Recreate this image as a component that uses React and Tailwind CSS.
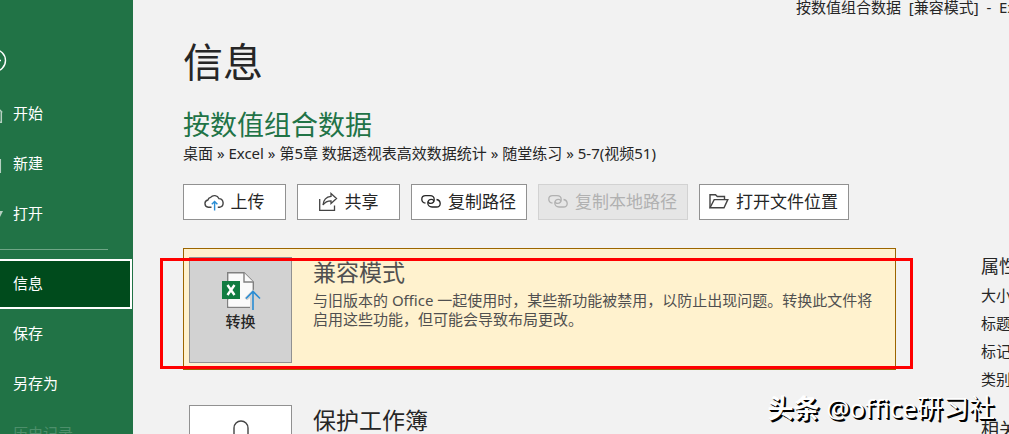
import clsx from 'clsx';

const navItems = [
  { label: '开始', icon: 'home' },
  { label: '新建', icon: 'page' },
  { label: '打开', icon: 'folder', last: true },
  { label: '信息', active: true },
  { label: '保存' },
  { label: '另存为' },
  { label: '历史记录', disabled: true },
];

const properties = ['大小', '标题', '标记', '类别'];

function NavIcon({ name }) {
  return (
    <svg className="w-1 h-5 shrink-0 mt-1" viewBox="0 0 4 20" fill="none" stroke="#b5d0c1" strokeWidth="1.5" aria-hidden="true">
      {name === 'home' && <path d="M-2 4.5L0 5.2L2.2 7.5M1.3 7V17.3H-2" />}
      {name === 'page' && <path d="M0.3 4V18" />}
      {name === 'folder' && <path fill="#b5d0c1" stroke="none" d="M0 6H3L0 12Z" />}
    </svg>
  );
}

function CloudIcon() {
  return (
    <svg className="w-5 h-5" viewBox="0 0 20 20" fill="none" strokeWidth="1.4" aria-hidden="true">
      <path stroke="#444" d="M7.5 15.3H4.3A3.7 3.7 0 0 1 3.9 8 A3.6 3.6 0 0 1 6.6 5.4 A4.9 4.9 0 0 1 14.9 6.6 A4.4 4.4 0 0 1 15.6 15.3 H13.8" />
      <path stroke="#2a8dd4" d="M10.6 18.5V9.5M7.8 12.3L10.6 9.5L13.4 12.3" />
    </svg>
  );
}

function ShareIcon() {
  return (
    <svg className="w-5 h-5" viewBox="0 0 20 20" fill="none" stroke="#444" strokeWidth="1.3" aria-hidden="true">
      <path d="M1.7 7V18.3H16.5V13.5" />
      <path d="M13 1.5L18.5 6.5L13 11.5V8.8C9.5 8.8 7 10 5 13C5.5 8 8.5 4.8 13 4.4Z" />
    </svg>
  );
}

function LinkIcon() {
  return (
    <svg className="w-5 h-5" viewBox="0 0 20 20" fill="none" stroke="currentColor" strokeWidth="1.3" aria-hidden="true">
      <path d="M4.5 11.2C2 10.7 .8 9.2 .8 7.2C.8 5 2.4 3.7 4.6 3.7H9C11.5 3.7 13.2 5.4 13.2 7.6C13.2 10 11.5 11.4 9.6 11.4C8.2 11.4 7.3 10.5 7.3 9.4" />
      <path d="M15.5 7.5C18 8 19.2 9.5 19.2 11.5C19.2 13.7 17.6 15 15.4 15H11C8.5 15 6.8 13.3 6.8 11.1C6.8 8.7 8.5 7.3 10.4 7.3C11.8 7.3 12.7 8.2 12.7 9.3" />
    </svg>
  );
}

function FolderIcon() {
  return (
    <svg className="w-5 h-5" viewBox="0 0 20 20" fill="none" stroke="#444" strokeWidth="1.4" aria-hidden="true">
      <path d="M1 15.8V2.7H6.5L8.3 4.5H15.5V7.5" />
      <path d="M1 15.8L5.2 7.6H18.8L15 15.8Z" />
    </svg>
  );
}

function ConvertIcon() {
  return (
    <svg className="w-10 h-10" viewBox="0 0 40 40" fill="none" aria-hidden="true">
      <path fill="#fafafa" stroke="#808080" strokeWidth="1.4" d="M6.7 2.7H23L32.3 12V37.3H6.7Z" />
      <path fill="#fafafa" stroke="#808080" strokeWidth="1.4" d="M23 2.7V12H32.3" />
      <path fill="#d2d2d2" d="M29 40V28L26 30.5L23.5 28L32 19.5L40 27V40Z" />
      <path fill="#fafafa" d="M7.4 30H29V36.6H7.4Z" />
      <rect x="1" y="11" width="18" height="18" fill="#107c41" />
      <path stroke="#fff" strokeWidth="2.4" d="M6.5 15L13.5 25M13.5 15L6.5 25" />
      <path stroke="#2a8dd4" strokeWidth="1.6" d="M32 40V22M25 28.5L32 21.5L39 28.5" />
    </svg>
  );
}

const actions = [
  { label: '上传', Icon: CloudIcon },
  { label: '共享', Icon: ShareIcon },
  { label: '复制路径', Icon: LinkIcon },
  { label: '复制本地路径', Icon: LinkIcon, disabled: true },
  { label: '打开文件位置', Icon: FolderIcon },
];

function Sidebar() {
  return (
    <nav className="w-[133px] shrink-0 bg-[#217346] text-[15px] text-white">
      <button aria-label="返回" className="block h-[89px] pt-8">
        <svg className="w-2 h-6" viewBox="0 0 8 24" fill="none" stroke="#fff" strokeWidth="1.4" aria-hidden="true">
          <circle cx="-5.5" cy="11.5" r="11" />
          <path d="M-9 11.5H1" />
        </svg>
      </button>
      {navItems.map((item) => (
        <div key={item.label}>
          <button
            disabled={item.disabled}
            className={clsx(
              'flex h-[50px] items-center pb-0.5 text-left',
              item.active ? 'w-[132px] border-y-2 border-r-2 border-white bg-[#004b1c]' : 'w-full',
              item.disabled && 'text-[#4d8f6b]'
            )}
          >
            <span className="flex w-[13px] shrink-0">{item.icon && <NavIcon name={item.icon} />}</span>
            {item.label}
          </button>
          {item.last && <hr className="mt-[10px] mb-[9px] w-[108px] border-[#6fa686]" />}
        </div>
      ))}
    </nav>
  );
}

function App() {
  return (
    <div className="relative flex h-screen overflow-hidden bg-[#f2f2f2] font-['Noto_Sans','Noto_Sans_CJK_SC',sans-serif] text-[#262626]">
      <Sidebar />
      <div className="min-w-0 flex-1 pl-[50px]">
        <div className="ml-auto w-[213px] whitespace-pre text-[15px] leading-[14px]">按数值组合数据  [兼容模式]  -  Excel</div>
        <h1 className="mt-[22px] text-[40px] leading-[52px]">信息</h1>
        <h2 className="mt-5 text-[27px] leading-[34px] text-[#217346]">按数值组合数据</h2>
        <p className="text-[15px] leading-[22px]">桌面 » Excel » 第5章 数据透视表高效数据统计 » 随堂练习 » 5-7(视频51)</p>

        <div className="mt-5 flex gap-[11px]">
          {actions.map(({ label, Icon, disabled }) => (
            <button
              key={label}
              disabled={disabled}
              className={clsx(
                'flex h-9 min-w-[103px] shrink-0 items-center justify-center gap-[7px] border pr-[10px] pl-[9px] text-[17px] whitespace-nowrap',
                disabled ? 'border-[#d2d2d2] bg-[#e6e6e6] text-[#b1b1b1]' : 'border-[#919191] bg-white'
              )}
            >
              <Icon />
              {label}
            </button>
          ))}
        </div>

        <div className="mt-7 flex">
          <div className="mr-[85px] min-w-0 flex-1">
            <section className="relative flex h-[122px] border border-[#9c6500] bg-[#fff2ce] pt-2 pl-[5px]">
              <button className="flex h-[106px] w-[103px] shrink-0 flex-col items-center border border-[#919191] bg-[#d2d2d2] pt-3 text-[15px] leading-[22px] font-medium">
                <ConvertIcon />
                转换
              </button>
              <div className="ml-[21px] pr-4 text-[#505050]">
                <h3 className="text-[23px] leading-[30px]">兼容模式</h3>
                <p className="mt-1 text-[15px] leading-[19px]">
                  与旧版本的 Office 一起使用时，某些新功能被禁用，以防止出现问题。转换此文件将启用这些功能，但可能会导致布局更改。
                </p>
              </div>
              <div className="pointer-events-none absolute top-[9px] -right-[18px] bottom-0 -left-6 border-3 border-[#ff0000]" />
            </section>
            <section className="mt-[35px] flex pl-[6px]">
              <button aria-label="保护工作簿" className="flex h-[106px] w-[103px] shrink-0 justify-center border border-[#919191] bg-white pt-[14px]">
                <svg className="w-5 h-8" viewBox="0 0 20 32" fill="none" stroke="#444" strokeWidth="1.4" aria-hidden="true">
                  <path d="M3 20V8A7 7 0 0 1 17 8V20" />
                </svg>
              </button>
              <h3 className="ml-[21px] text-[23px] leading-[30px]">保护工作簿</h3>
            </section>
          </div>
          <aside className="w-7 shrink-0 whitespace-nowrap">
            <h4 className="mt-1 text-[18px] leading-7">属性</h4>
            <ul className="mt-px text-[15px] leading-7">
              {properties.map((name) => (
                <li key={name}>{name}</li>
              ))}
            </ul>
            <h4 className="mt-[22px] text-[18px] leading-7">相关人员</h4>
          </aside>
        </div>
      </div>
      <p className="absolute right-[14px] bottom-[10px] text-[26px] leading-8 whitespace-nowrap text-white text-shadow-[1px_1px_0_#000,2px_2px_0_#000]">
        <b className="font-bold">头条</b> @office研习社
      </p>
    </div>
  );
}

export default App;
